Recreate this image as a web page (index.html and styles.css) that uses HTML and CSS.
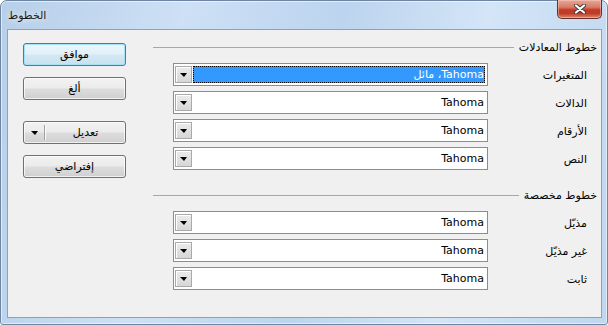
FILE: index.html
```html
<!DOCTYPE html>
<html lang="ar">
<head>
  <meta charset="UTF-8" />
  <title>الخطوط</title>
  <link rel="stylesheet" href="styles.css">
</head>
<body>
  <div class="window">
    <div class="titlebar">
      <span class="title">الخطوط</span>
      <div class="close">
        <svg width="12" height="10" viewBox="0 0 12 10">
          <path d="M2 1.5 L10 8.5 M10 1.5 L2 8.5" stroke="#3a3a3a" stroke-width="4" stroke-linecap="round"/>
          <path d="M2 1.5 L10 8.5 M10 1.5 L2 8.5" stroke="#fff" stroke-width="2.2" stroke-linecap="round"/>
        </svg>
      </div>
    </div>

    <div class="client">
      <div class="fonts">
        <div class="group-title"><span>خطوط المعادلات</span><div class="rule"></div></div>
        <div class="rows">
          <div class="row">
            <label>المتغيرات</label>
            <div class="combo">
              <div class="field selected"><span>Tahoma، مائل</span></div>
              <div class="drop"><i></i></div>
            </div>
          </div>
          <div class="row">
            <label>الدالات</label>
            <div class="combo"><div class="field"><span>Tahoma</span></div><div class="drop"><i></i></div></div>
          </div>
          <div class="row">
            <label>الأرقام</label>
            <div class="combo"><div class="field"><span>Tahoma</span></div><div class="drop"><i></i></div></div>
          </div>
          <div class="row">
            <label>النص</label>
            <div class="combo"><div class="field"><span>Tahoma</span></div><div class="drop"><i></i></div></div>
          </div>
        </div>

        <div class="group-title second"><span>خطوط مخصصة</span><div class="rule"></div></div>
        <div class="rows">
          <div class="row">
            <label>مذيّل</label>
            <div class="combo"><div class="field"><span>Tahoma</span></div><div class="drop"><i></i></div></div>
          </div>
          <div class="row">
            <label>غير مذيّل</label>
            <div class="combo"><div class="field"><span>Tahoma</span></div><div class="drop"><i></i></div></div>
          </div>
          <div class="row">
            <label>ثابت</label>
            <div class="combo"><div class="field"><span>Tahoma</span></div><div class="drop"><i></i></div></div>
          </div>
        </div>
      </div>

      <div class="buttons">
        <button class="btn default">موافق</button>
        <button class="btn">ألغ</button>
        <button class="btn split">
          <span class="btn-text">تعديل</span>
          <span class="sep"></span>
          <span class="btn-arrow"><i></i></span>
        </button>
        <button class="btn">إفتراضي</button>
      </div>
    </div>
  </div>
</body>
</html>
```

FILE: styles.css
```css
* {
  box-sizing: border-box;
}

body {
  margin: 0;
  font-family: 'DejaVu Sans', sans-serif;
  font-size: 11px;
  color: #000;
  background: #fff;
}

.window {
  width: 608px;
  height: 325px;
  border: 1px solid #6f86a3;
  border-radius: 7px 7px 3px 3px;
  background: linear-gradient(100deg, #b7cfe9 0%, #cde0f5 28%, #bcd4ee 52%, #d3e5f7 74%, #bfd6ef 100%);
  box-shadow: inset 0 0 0 1px rgba(255, 255, 255, 0.55);
  padding: 0 5px 6px 6px;
  display: flex;
  flex-direction: column;
}

.titlebar {
  height: 28px;
  display: flex;
  justify-content: space-between;
  align-items: flex-start;
}

.title {
  margin-top: 8px;
  padding-left: 1px;
  font-size: 11px;
  color: #1a1a1a;
  text-shadow: 0 0 6px #fff;
}

.close {
  width: 45px;
  height: 19px;
  margin-top: -1px;
  border: 1px solid #6b2f27;
  border-top: none;
  border-radius: 0 0 5px 5px;
  background: linear-gradient(#e7a899 0%, #d77a66 40%, #c33a22 55%, #bf3d28 75%, #d88a72 100%);
  box-shadow: inset 0 0 0 1px rgba(255, 210, 200, 0.45);
  display: flex;
  align-items: center;
  justify-content: center;
}

.client {
  flex: 1;
  direction: rtl;
  border: 1px solid #8ca1bd;
  background: #f0f0f0;
  display: flex;
  justify-content: space-between;
  padding-left: 15px;
}

.fonts {
  width: 448px;
  padding-top: 11px;
  padding-right: 4px;
}

.group-title {
  display: flex;
  align-items: center;
  height: 13px;
  line-height: 13px;
  gap: 5px;
}

.group-title span {
  white-space: nowrap;
}

.group-title.second {
  margin-top: 19px;
}

.rule {
  flex: 1;
  height: 1px;
  background: #a7a7a7;
}

.rows {
  margin-top: 9px;
  padding-right: 10px;
  display: flex;
  flex-direction: column;
  gap: 5px;
}

.row {
  display: flex;
  align-items: center;
}

.row label {
  width: 99px;
  padding-top: 2px;
  text-align: right;
}

.combo {
  width: 315px;
  height: 23px;
  border: 1px solid #8d8d8d;
  background: #fff;
  padding: 2px 2px 2px 1px;
  display: flex;
}

.field {
  flex: 1;
  height: 17px;
  line-height: 17px;
  padding-right: 1px;
  margin-left: 1px;
  text-align: right;
  white-space: nowrap;
  overflow: hidden;
}

.field.selected {
  background: #3399ff;
  color: #fff;
  outline: 1px dotted #000;
  outline-offset: -1px;
}

.drop {
  width: 17px;
  height: 17px;
  border: 1px solid #a9a9a9;
  background: linear-gradient(#ececec, #d6d6d6);
  box-shadow: inset 1px 1px 0 #fff;
  display: flex;
  align-items: center;
  justify-content: center;
}

.drop i,
.btn-arrow i {
  display: block;
  width: 0;
  height: 0;
  border-left: 4px solid transparent;
  border-right: 3px solid transparent;
  border-top: 4px solid #000;
}

.buttons {
  width: 103px;
  padding-top: 13px;
  display: flex;
  flex-direction: column;
  gap: 11px;
}

.btn {
  height: 23px;
  width: 103px;
  border: 1px solid #707070;
  border-radius: 3px;
  background: linear-gradient(#f2f2f2 0%, #ebebeb 48%, #dddddd 52%, #cfcfcf 100%);
  box-shadow: inset 0 0 0 1px rgba(255, 255, 255, 0.7);
  font-family: 'DejaVu Sans', sans-serif;
  font-size: 11px;
  color: #000;
  padding: 0;
  direction: rtl;
}

.btn.default {
  border-color: #3c7fb1;
  box-shadow: inset 0 0 0 1px #a6e0f5;
  background: linear-gradient(#eaf6fd 0%, #e2f0f8 48%, #d3e8f4 52%, #c8e0ef 100%);
}

.btn.split {
  margin-top: 10px;
  display: flex;
  align-items: stretch;
}

.btn-text {
  flex: 1;
  display: flex;
  align-items: center;
  justify-content: center;
}

.sep {
  width: 2px;
  margin: 3px 0;
  border-left: 1px solid #a0a0a0;
  border-right: 1px solid #fbfbfb;
}

.btn-arrow {
  width: 20px;
  display: flex;
  align-items: center;
  justify-content: center;
}
```
